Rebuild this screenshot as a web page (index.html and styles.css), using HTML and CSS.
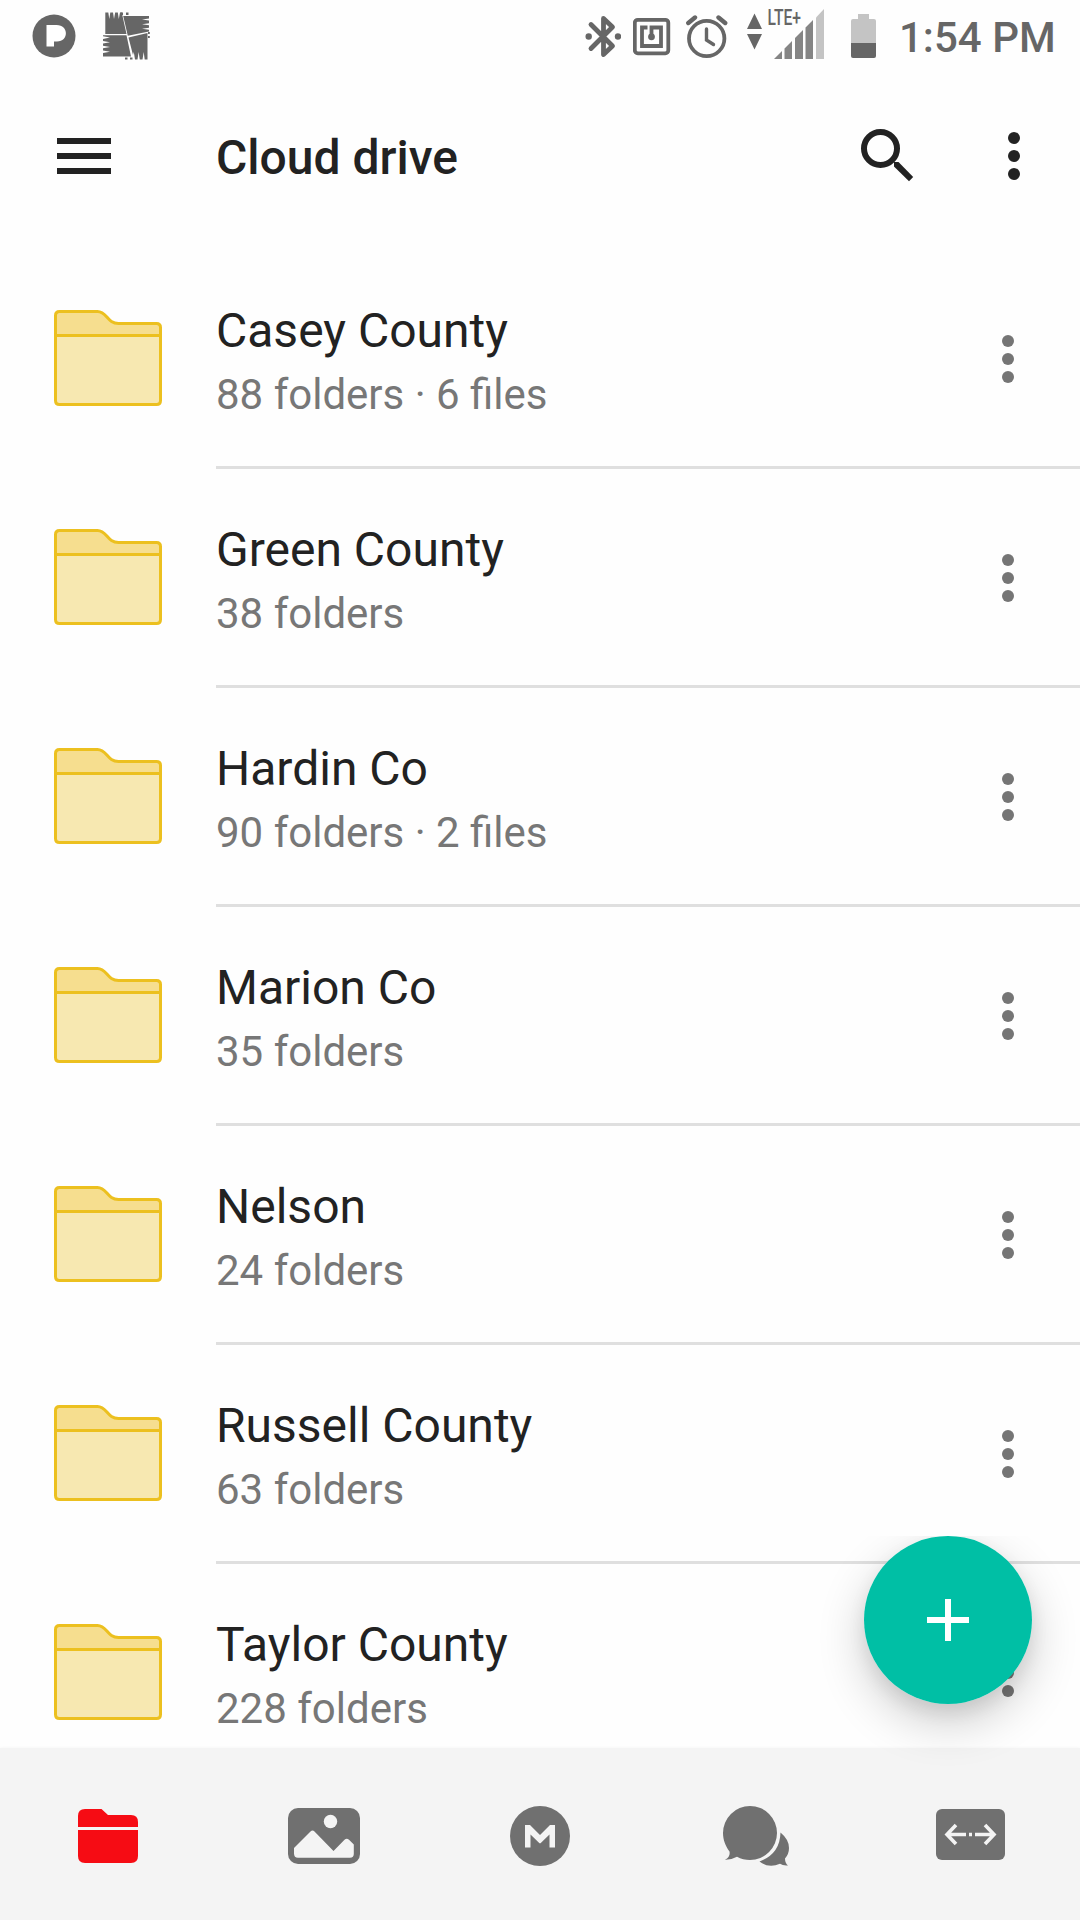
FILE: index.html
```html
<!DOCTYPE html>
<html lang="en">
<head>
<meta charset="utf-8">
<title>Cloud drive</title>
<link rel="stylesheet" href="styles.css">
</head>
<body>
<svg width="0" height="0" class="defs" aria-hidden="true">
  <symbol id="folder" viewBox="0 0 108 96">
    <path d="M1.5 25.500V5.500Q1.500 1.500 5.500 1.500H43.500C53 1.500 53 13.500 64.500 13.500H102.500Q106.500 13.500 106.500 17.500V25.500Z" fill="#f6de8f"/>
    <path d="M1.500 25.500H106.500V90.500Q106.500 94.500 102.500 94.500H5.500Q1.500 94.500 1.500 90.500Z" fill="#f7e8b1"/>
    <path d="M1.500 5.500Q1.500 1.500 5.500 1.500H43.500C53 1.500 53 13.500 64.500 13.500H102.500Q106.500 13.500 106.500 17.500V90.500Q106.500 94.500 102.500 94.500H5.500Q1.500 94.500 1.500 90.500ZM1.500 25.500H106.500" fill="none" stroke="#ecc01f" stroke-width="3"/>
  </symbol>
  <symbol id="dots" viewBox="0 0 12 48">
    <circle cx="6" cy="6" r="6"/><circle cx="6" cy="24" r="6"/><circle cx="6" cy="42" r="6"/>
  </symbol>
</svg>
<div class="screen">
  <header class="status">
    <div class="status-group">
      <svg width="44" height="72" viewBox="32 0 44 72"><circle cx="54" cy="36" r="21.500" fill="#666"/><path d="M46.500 25H56.500C69 25 69 41.500 57 41.500H54V46.500H46.500Z" fill="#fff"/></svg>
      <svg class="scan-icon" width="50" height="72" viewBox="101 0 50 72" fill="#666">
        <path d="M105.300 34V12.500H108.300L109.300 19L110.300 12.500H113L114 19L115.200 12.500H117.800L118.800 19L120 12.500H122L122.500 16L126.500 34Z"/>
        <path d="M123.200 16H149V18.500L142 19.500L149 20.500V23.200L142 24.200L149 25.200V27.800L142 28.800L149 29.800V31.500L127.800 35.800Z"/>
        <path d="M126.500 35.300H103V36.300L110 37.500L103 39V41L110 42.200L103 43.500V45.800L110 47L103 48.200V50.500L110 51.800L103 53V56.500H131Z"/>
        <path d="M128.500 37.500L147.500 33V59.500H144.700L143.700 52L142.500 59.500H139.800L138.600 52L137.500 59.500H135L133.800 52L133 55Z"/>
        <path d="M120.500 12.500h2.500v2.500h-2.500zM126 12.500h2.500v2.500h-2.500zM148 32h1.800v2h-1.800zM148 36h1.800v2h-1.800zM125 57.500h2.500v2h-2.500zM130 57.500h2.500v2h-2.500z"/>
      </svg>
    </div>
    <div class="status-group">
      <svg width="36" height="72" viewBox="585 0 36 72"><path d="M591 24.500L612.500 46L603.500 54.500V18.500L612.500 27L591 48.500" fill="none" stroke="#666" stroke-width="4.800" stroke-linecap="round" stroke-linejoin="round"/><circle cx="588.700" cy="36.500" r="3.200" fill="#666"/><circle cx="618" cy="36.500" r="3.200" fill="#666"/></svg>
      <svg class="nfc-icon" width="38" height="72" viewBox="633 0 38 72" fill="none" stroke="#666"><rect x="634.800" y="19.800" width="33.500" height="33.500" rx="3" stroke-width="3.800"/><path d="M647.500 27.500H642V46H661V27.500H651.500V37" stroke-width="3.800"/><circle cx="651.500" cy="36.800" r="3.400" fill="#666" stroke="none"/></svg>
      <svg class="alarm-icon" width="42" height="72" viewBox="686 0 42 72" fill="none" stroke="#666" stroke-width="3.800" stroke-linecap="round"><circle cx="706.700" cy="38.500" r="17.700"/><path d="M706.500 29V40L713.500 44.500" stroke-width="3.400"/><path d="M688.300 23L695 17.500M718.500 17.500L725.200 23" stroke-width="4.400"/></svg>
      <svg class="signal-icon" width="78" height="72" viewBox="747 0 78 72">
        <path d="M754.500 13.500L762 29H747ZM747 34H762L754.500 49.500Z" fill="#666"/>
        <path d="M774 59L782 51V59ZM784.500 59V48.500L792 41V59ZM795 59V38L803 30V59ZM805.500 59V27.500L813 20V59Z" fill="#858585"/>
        <path d="M816 59V17.500L824 9V59Z" fill="#c4c4c4"/>
        <text x="767.500" y="25" textLength="33.500" lengthAdjust="spacingAndGlyphs" class="network">LTE+</text>
      </svg>
      <svg class="battery-icon" width="25" height="72" viewBox="851 0 25 72"><path d="M858 14H869V19H874Q876 19 876 21V43H851V21Q851 19 853 19H858Z" fill="#c4c4c4"/><path d="M851 43H876V56Q876 58 874 58H853Q851 58 851 56Z" fill="#666"/></svg>
      <span class="clock">1:54 PM</span>
    </div>
  </header>
  <div class="appbar">
    <svg width="54" height="36" viewBox="0 0 54 36" fill="#222"><path d="M0 0H54V6H0ZM0 15H54V21H0ZM0 30H54V36H0Z"/></svg>
    <h1 class="appbar-title">Cloud drive</h1>
    <svg class="search-icon" width="54" height="54" viewBox="860 129 54 54" fill="none" stroke="#222"><circle cx="880.500" cy="148.500" r="16.500" stroke-width="6"/><path d="M894 162H898.500L913.200 177L909 181.200L894 166.500Z" fill="#222" stroke="none"/></svg>
    <svg class="more" width="12" height="48" fill="#222"><use href="#dots"/></svg>
  </div>
  <main class="list">
    <div class="row"><svg class="folder" width="108" height="96"><use href="#folder"/></svg><div class="body"><div class="text"><div class="name">Casey County</div><div class="meta">88 folders · 6 files</div></div><svg class="row-more" width="12" height="48"><use href="#dots"/></svg></div></div>
    <div class="row"><svg class="folder" width="108" height="96"><use href="#folder"/></svg><div class="body"><div class="text"><div class="name">Green County</div><div class="meta">38 folders</div></div><svg class="row-more" width="12" height="48"><use href="#dots"/></svg></div></div>
    <div class="row"><svg class="folder" width="108" height="96"><use href="#folder"/></svg><div class="body"><div class="text"><div class="name">Hardin Co</div><div class="meta">90 folders · 2 files</div></div><svg class="row-more" width="12" height="48"><use href="#dots"/></svg></div></div>
    <div class="row"><svg class="folder" width="108" height="96"><use href="#folder"/></svg><div class="body"><div class="text"><div class="name">Marion Co</div><div class="meta">35 folders</div></div><svg class="row-more" width="12" height="48"><use href="#dots"/></svg></div></div>
    <div class="row"><svg class="folder" width="108" height="96"><use href="#folder"/></svg><div class="body"><div class="text"><div class="name">Nelson</div><div class="meta">24 folders</div></div><svg class="row-more" width="12" height="48"><use href="#dots"/></svg></div></div>
    <div class="row"><svg class="folder" width="108" height="96"><use href="#folder"/></svg><div class="body"><div class="text"><div class="name">Russell County</div><div class="meta">63 folders</div></div><svg class="row-more" width="12" height="48"><use href="#dots"/></svg></div></div>
    <div class="row"><svg class="folder" width="108" height="96"><use href="#folder"/></svg><div class="body"><div class="text"><div class="name">Taylor County</div><div class="meta">228 folders</div></div><svg class="row-more" width="12" height="48"><use href="#dots"/></svg></div></div>
  </main>
  <nav class="tabs">
    <div class="tab"><svg width="72" height="72" viewBox="0 0 72 72" fill="#f60c14"><path d="M6 27V16Q6 9 13 9H29.500L36 15H59Q66 15 66 22V27ZM6 30H66V56Q66 63 59 63H13Q6 63 6 56Z"/></svg></div>
    <div class="tab"><svg width="72" height="72" viewBox="0 0 72 72"><rect y="8" width="72" height="56" rx="10" fill="#707070"/><circle cx="42.500" cy="21.500" r="6.700" fill="#f4f4f4"/><path d="M6 48L22.500 31.500Q24.500 29.500 26.500 31.500L45.500 51L56.500 39.800Q58.700 37.700 61 39.800L65.800 44.500V54Q65.800 57.700 62 57.700H10Q6 57.700 6 53.500Z" fill="#f4f4f4"/></svg></div>
    <div class="tab"><svg width="72" height="72" viewBox="0 0 72 72"><circle cx="36" cy="36" r="30" fill="#707070"/><path d="M21 25H26L36 35L46 25H51V47.500H45.500V34.500L36.500 43.200H35.500L26.500 34.500V47.500H21Z" fill="#f4f4f4"/></svg></div>
    <div class="tab"><svg width="72" height="72" viewBox="0 0 72 72" fill="#707070"><path d="M30 6A27 27 0 1 1 30 60Q23 60 17 56.700Q11 60 5 59.800Q10.500 57 9.500 51.500C5.500 46 3 40 3 33A27 27 0 0 1 30 6Z"/><path d="M60.500 32.500Q69 39.500 69 48Q69 54 65 58.500Q65 63 68 65.500Q63 66 60 63.800Q48.500 68.500 39.500 61.500Q60 54 60.500 32.500Z"/></svg></div>
    <div class="tab"><svg width="72" height="72" viewBox="0 0 72 72"><rect y="9" width="69" height="51" rx="6" fill="#707070"/><path d="M30 34.500H11M20 25L11 34.500L20 44M39 34.500H58M49 25L58 34.500L49 44M33 34.500H36" fill="none" stroke="#f4f4f4" stroke-width="3.600"/></svg></div>
  </nav>
  <div class="fab-shadow"></div>
  <button class="fab" aria-label="Add"><svg width="42" height="42" viewBox="0 0 42 42"><path d="M18 0H24V18H42V24H24V42H18V24H0V18H18Z" fill="#fff"/></svg></button>
</div>
</body>
</html>
```
FILE: styles.css
```css
* { box-sizing: border-box; }
body { margin: 0; font-family: Roboto, sans-serif; background: #fff; }
svg { display: block; flex: none; }
.defs { position: absolute; }
.screen {
  position: relative;
  display: flex;
  flex-direction: column;
  width: 1080px;
  height: 1920px;
  overflow: hidden;
  background: #fefefe;
}
.status {
  display: flex;
  justify-content: space-between;
  height: 72px;
  padding: 0 25px 0 32px;
}
.status-group { display: flex; }
.scan-icon { margin-left: 25px; }
.nfc-icon { margin-left: 12px; }
.alarm-icon { margin-left: 15px; }
.signal-icon { margin-left: 19px; }
.battery-icon { margin-left: 26px; }
.network { font: 500 21.5px Roboto, sans-serif; fill: #666; }
.clock {
  width: 156px;
  margin-left: 23px;
  font-size: 42px;
  font-weight: 500;
  line-height: 76px;
  color: #666;
  white-space: nowrap;
}
.appbar {
  display: flex;
  align-items: center;
  height: 168px;
  padding: 0 60px 0 57px;
}
.appbar-title {
  flex: 1;
  margin: 0 0 0 105px;
  padding-top: 4px;
  font-size: 48px;
  font-weight: 500;
  line-height: 56px;
  color: #222;
}
.search-icon { margin-right: 94px; }
.list {
  flex: 1;
  min-height: 0;
  padding-top: 10px;
  overflow: hidden;
}
.row { display: flex; height: 219px; padding-left: 54px; }
.folder { margin: 60px 54px 0 0; }
.body {
  display: flex;
  flex: 1;
  justify-content: space-between;
  border-bottom: 3px solid #dfdfdf;
  padding-right: 66px;
}
.text { display: flex; flex-direction: column; gap: 11px; padding-top: 53px; }
.name { font-size: 48px; line-height: 56px; color: #222; }
.meta { font-size: 42px; line-height: 49px; color: #777; }
.row-more { margin-top: 85px; fill: #757575; }
.tabs {
  display: flex;
  align-items: center;
  height: 172px;
  padding-top: 4px;
  background: #f4f4f4;
  box-shadow: 0 0 3px #f4f4f4;
}
.tab { display: flex; flex: 1; justify-content: center; }
.fab-shadow {
  position: absolute;
  left: 864px;
  top: 1536px;
  width: 168px;
  height: 168px;
  border-radius: 50%;
  box-shadow: 0 18px 48px rgba(0, 0, 0, .2), 0 8px 18px rgba(0, 0, 0, .08);
  clip-path: inset(0 -80px -90px -80px);
}
.fab {
  position: absolute;
  left: 864px;
  top: 1536px;
  display: flex;
  align-items: center;
  justify-content: center;
  width: 168px;
  height: 168px;
  padding: 0;
  border: 0;
  border-radius: 50%;
  background: #00bfa5;
}
```
